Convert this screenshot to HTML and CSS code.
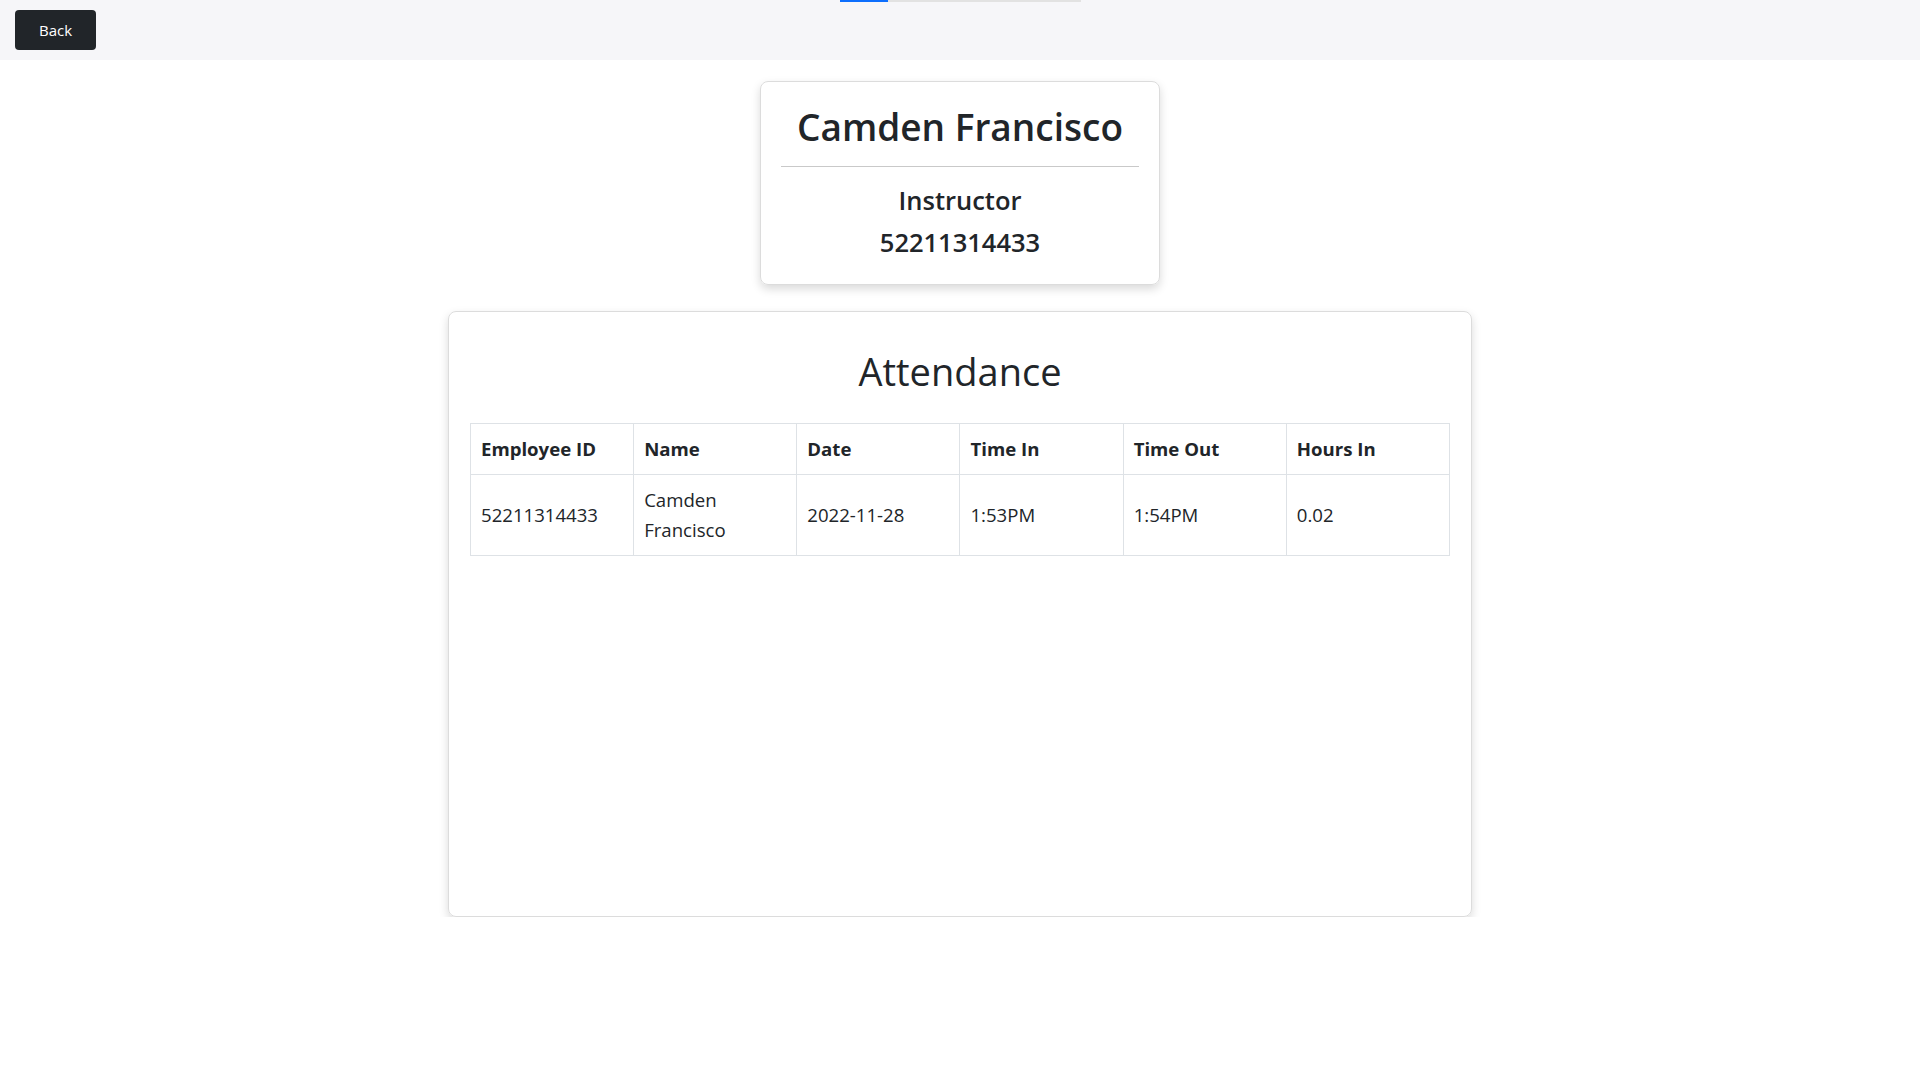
FILE: index.html
```html
<!DOCTYPE html>
<html>
<head lang="en">
    <meta charset="UTF-8">
    <title>Employee Attendance</title>
    <link rel="stylesheet" href="styles.css">
</head>
<body>
    <div class="topbar">
        <div class="loader"><span></span></div>
        <button class="back-btn">Back</button>
    </div>

    <main class="page">
        <section class="profile-card">
            <h1 class="profile-name">Camden Francisco</h1>
            <hr class="profile-line">
            <h3 class="profile-info">Instructor</h3>
            <h3 class="profile-info">52211314433</h3>
        </section>

        <section class="attendance-card">
            <h2 class="attendance-title">Attendance</h2>
            <table class="attendance-table">
                <thead>
                    <tr>
                        <th>Employee ID</th>
                        <th>Name</th>
                        <th>Date</th>
                        <th>Time In</th>
                        <th>Time Out</th>
                        <th>Hours In</th>
                    </tr>
                </thead>
                <tbody>
                    <tr>
                        <td>52211314433</td>
                        <td>Camden Francisco</td>
                        <td>2022-11-28</td>
                        <td>1:53PM</td>
                        <td>1:54PM</td>
                        <td>0.02</td>
                    </tr>
                </tbody>
            </table>
        </section>
    </main>
</body>
</html>
```

FILE: styles.css
```css
* {
    box-sizing: border-box;
}
body {
    margin: 0;
    font-family: "Open Sans", "Noto Sans", sans-serif;
    color: #212529;
    background: #fff;
}
.topbar {
    position: relative;
    height: 60px;
    padding: 10px 15px;
    background: #f6f6f9;
}
/* page loading indicator on top */
.loader {
    position: absolute;
    top: 0;
    left: 50%;
    margin-left: -120px;
    width: 241px;
    height: 2px;
    background: #e2e2e2;
}
.loader span {
    display: block;
    width: 48px;
    height: 100%;
    background: #0d6efd;
}
.back-btn {
    height: 40px;
    padding: 0 24px;
    border: 0;
    border-radius: 4px;
    background: #212529;
    color: #fff;
    font-family: inherit;
    font-size: 15px;
    cursor: pointer;
}
.page {
    display: flex;
    flex-direction: column;
    align-items: center;
    gap: 26px;
    padding-top: 21px;
}
.profile-card {
    width: 400px;
    padding: 21px 20px 17px;
    border: 1px solid #dcdcdc;
    border-radius: 8px;
    box-shadow: 0 4px 10px rgba(0, 0, 0, 0.15);
    text-align: center;
}
.profile-name {
    margin: 0;
    font-size: 37px;
    font-weight: 600;
    line-height: 48px;
}
.profile-line {
    margin: 15px 0 17px;
    border: 0;
    border-top: 1px solid #c9c9c9;
}
.profile-info {
    margin: 0 0 8px;
    font-size: 25.5px;
    font-weight: 600;
    line-height: 33.6px;
}
.attendance-card {
    width: 1024px;
    height: 606px;
    padding: 20px 21px;
    border: 1px solid #dcdcdc;
    border-radius: 8px;
    box-shadow: 0 4px 10px rgba(0, 0, 0, 0.15);
}
.attendance-title {
    margin: 15px 0 28px;
    font-size: 38px;
    font-weight: 400;
    line-height: 48px;
    text-align: center;
}
.attendance-table {
    width: 100%;
    border-collapse: collapse;
    table-layout: fixed;
}
.attendance-table th,
.attendance-table td {
    padding: 10px;
    border: 1px solid #dee2e6;
    font-size: 18.6px;
    line-height: 30px;
    text-align: left;
    vertical-align: middle;
}
.attendance-table th {
    font-weight: 700;
}
```
